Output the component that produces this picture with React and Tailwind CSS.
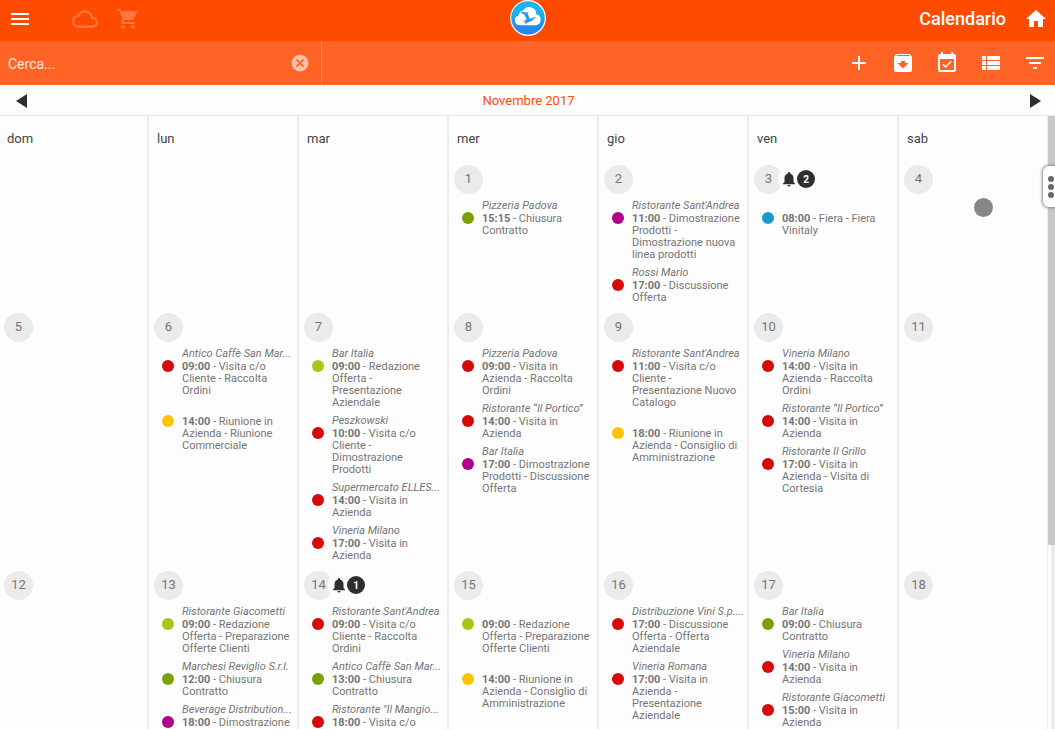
import {
  MdMenu,
  MdOutlineCloud,
  MdShoppingCart,
  MdHome,
  MdAdd,
  MdArchive,
  MdEventAvailable,
  MdViewList,
  MdFilterList,
  MdCancel,
  MdNotifications,
} from "react-icons/md";

const weekDays = ["dom", "lun", "mar", "mer", "gio", "ven", "sab"];

const colors = {
  red: "bg-[#d60808]",
  purple: "bg-[#b0008a]",
  green: "bg-[#7ba000]",
  lime: "bg-[#a4c814]",
  yellow: "bg-[#ffc400]",
  blue: "bg-[#1c98cc]",
};

const weeks = [
  [
    {},
    {},
    {},
    {
      day: 1,
      events: [["Pizzeria Padova", "15:15", "Chiusura Contratto", "green"]],
    },
    {
      day: 2,
      events: [
        ["Ristorante Sant'Andrea", "11:00", "Dimostrazione Prodotti - Dimostrazione nuova linea prodotti", "purple"],
        ["Rossi Mario", "17:00", "Discussione Offerta", "red"],
      ],
    },
    {
      day: 3,
      alerts: 2,
      events: [["", "08:00", "Fiera - Fiera Vinitaly", "blue"]],
    },
    { day: 4 },
  ],
  [
    { day: 5 },
    {
      day: 6,
      events: [
        ["Antico Caffè San Mar...", "09:00", "Visita c/o Cliente - Raccolta Ordini", "red"],
        ["", "14:00", "Riunione in Azienda - Riunione Commerciale", "yellow"],
      ],
    },
    {
      day: 7,
      events: [
        ["Bar Italia", "09:00", "Redazione Offerta - Presentazione Aziendale", "lime"],
        ["Peszkowski", "10:00", "Visita c/o Cliente - Dimostrazione Prodotti", "red"],
        ["Supermercato ELLES...", "14:00", "Visita in Azienda", "red"],
        ["Vineria Milano", "17:00", "Visita in Azienda", "red"],
      ],
    },
    {
      day: 8,
      events: [
        ["Pizzeria Padova", "09:00", "Visita in Azienda - Raccolta Ordini", "red"],
        ["Ristorante “Il Portico”", "14:00", "Visita in Azienda", "red"],
        ["Bar Italia", "17:00", "Dimostrazione Prodotti - Discussione Offerta", "purple"],
      ],
    },
    {
      day: 9,
      events: [
        ["Ristorante Sant'Andrea", "11:00", "Visita c/o Cliente - Presentazione Nuovo Catalogo", "red"],
        ["", "18:00", "Riunione in Azienda - Consiglio di Amministrazione", "yellow"],
      ],
    },
    {
      day: 10,
      events: [
        ["Vineria Milano", "14:00", "Visita in Azienda - Raccolta Ordini", "red"],
        ["Ristorante “Il Portico”", "14:00", "Visita in Azienda", "red"],
        ["Ristorante Il Grillo", "17:00", "Visita in Azienda - Visita di Cortesia", "red"],
      ],
    },
    { day: 11 },
  ],
  [
    { day: 12 },
    {
      day: 13,
      events: [
        ["Ristorante Giacometti", "09:00", "Redazione Offerta - Preparazione Offerte Clienti", "lime"],
        ["Marchesi Reviglio S.r.l.", "12:00", "Chiusura Contratto", "green"],
        ["Beverage Distribution...", "18:00", "Dimostrazione", "purple"],
      ],
    },
    {
      day: 14,
      alerts: 1,
      events: [
        ["Ristorante Sant'Andrea", "09:00", "Visita c/o Cliente - Raccolta Ordini", "red"],
        ["Antico Caffè San Mar...", "13:00", "Chiusura Contratto", "green"],
        ["Ristorante \"Il Mangio...", "18:00", "Visita c/o", "red"],
      ],
    },
    {
      day: 15,
      events: [
        ["", "09:00", "Redazione Offerta - Preparazione Offerte Clienti", "lime"],
        ["", "14:00", "Riunione in Azienda - Consiglio di Amministrazione", "yellow"],
      ],
    },
    {
      day: 16,
      events: [
        ["Distribuzione Vini S.p....", "17:00", "Discussione Offerta - Offerta Aziendale", "red"],
        ["Vineria Romana", "17:00", "Visita in Azienda - Presentazione Aziendale", "red"],
      ],
    },
    {
      day: 17,
      events: [
        ["Bar Italia", "09:00", "Chiusura Contratto", "green"],
        ["Vineria Milano", "14:00", "Visita in Azienda", "red"],
        ["Ristorante Giacometti", "15:00", "Visita in Azienda", "red"],
      ],
    },
    { day: 18 },
  ],
];

function Logo() {
  return (
    <svg viewBox="0 0 36 36" className="size-9" role="img" aria-label="Logo">
      <defs>
        <linearGradient id="sky" x1="0" y1="0" x2="0" y2="1">
          <stop offset="0.3" stopColor="#1cb4f0" />
          <stop offset="0.8" stopColor="#2888ec" />
        </linearGradient>
      </defs>
      <circle cx="18" cy="18" r="17.3" fill="url(#sky)" stroke="#fff" strokeWidth="1.2" />
      <path
        d="M9.500 25.200a5 5 0 0 1-.8-9.800 4.500 4.500 0 0 1 4.300-4.600 7 7 0 0 1 13.200 3.400 5.600 5.600 0 0 1-.2 11z"
        fill="#fff"
      />
      <path
        d="M10.600 12.400c1.600-.5 3-.5 4.300.1l3.600-.2-1 1.400c1 1.300 1.600 2.900 1.600 4.700 1.900.3 3.400-.1 4.700-1.100l2.600-.1-1.900 1c-1.500 2.300-3.400 3.400-5.600 3.800l-4.700 2.600 1.500-2.800-2.700-.3 3.600-2.300c-.4-1.500-1.100-2.600-2.200-3.400l.9-.5z"
        fill="#2896ee"
      />
    </svg>
  );
}

function Event({ event }) {
  const [name, time, text, color] = event;

  return (
    <li className="mb-[5px] pl-[33px]">
      <p className="h-[13px] truncate leading-[13px] italic">{name}</p>
      <div className="flex">
        <span className={`-ml-5 mr-2 size-3 shrink-0 rounded-full ${colors[color]}`} />
        <p className="flex-1 pt-px pr-[3px]">
          <b className="inline-block font-bold">{time}</b> - {text}
        </p>
      </div>
    </li>
  );
}

function Day({ cell }) {
  return (
    <td className="h-[38px] border-r-2 border-[#ebebeb] p-0 align-top">
      {cell.day && (
        <div className="flex h-[34px] items-start pl-[5px]">
          <span className="flex size-[29px] items-center justify-center rounded-full bg-[#ebebeb] pb-px text-[13px]">
            {cell.day}
          </span>
          {cell.alerts && (
            <span className="-ml-[5px] flex h-7 items-center rounded-l-full bg-[#fdfdfd] pl-0.5 text-[#2e2e2e]">
              <MdNotifications className="size-[18px]" />
              <span className="-ml-px flex size-[18px] items-center justify-center rounded-full bg-[#2e2e2e] text-[10px] font-bold text-white">
                {cell.alerts}
              </span>
            </span>
          )}
        </div>
      )}
      {cell.events && (
        <ul className="pb-1 text-[11px] leading-3">
          {cell.events.map((event, i) => (
            <Event key={i} event={event} />
          ))}
        </ul>
      )}
    </td>
  );
}

function App() {
  return (
    <div className="flex h-screen flex-col overflow-hidden bg-[#fdfdfd] font-['Roboto',sans-serif] text-[#757575]">
      {/* HEADER */}
      <header className="relative flex h-[41px] shrink-0 items-center justify-between bg-[#ff4b00] pr-[7px] pb-[3px] pl-2 text-white">
        <div className="flex items-center">
          <button type="button" aria-label="Menu">
            <MdMenu className="size-6" />
          </button>
          <MdOutlineCloud className="ml-10 size-[26px] text-[#ff7640]" />
          <MdShoppingCart className="ml-[18px] size-6 text-[#ff7640]" />
        </div>
        <div className="absolute left-1/2 top-0 -translate-x-1/2">
          <Logo />
        </div>
        <div className="flex items-center gap-[18px]">
          <h1 className="text-lg font-medium">Calendario</h1>
          <a href="#home" aria-label="Home">
            <MdHome className="size-6" />
          </a>
        </div>
      </header>

      {/* TOOLBAR */}
      <div className="flex h-11 shrink-0 items-stretch bg-[#ff6426] text-white">
        <div className="flex w-[322px] items-center border-r border-[#ff9166] pr-[11px] pl-2">
          <input
            type="text"
            placeholder="Cerca..."
            aria-label="Cerca"
            className="min-w-0 flex-1 pt-0.5 text-sm outline-none placeholder:text-white/85"
          />
          <button type="button" aria-label="Cancella" className="text-[#ffc1a8]">
            <MdCancel className="size-5" />
          </button>
        </div>
        <div className="flex flex-1 items-center justify-end gap-5 pr-2">
          <button type="button" aria-label="Aggiungi">
            <MdAdd className="size-6" />
          </button>
          <button type="button" aria-label="Archivia">
            <MdArchive className="size-6" />
          </button>
          <button type="button" aria-label="Attività">
            <MdEventAvailable className="size-6" />
          </button>
          <button type="button" aria-label="Elenco">
            <MdViewList className="size-6" />
          </button>
          <button type="button" aria-label="Filtra">
            <MdFilterList className="size-6" />
          </button>
        </div>
      </div>

      {/* MONTH */}
      <div className="flex h-[31px] shrink-0 items-center justify-between border-b border-[#e6e6e6] pt-px pr-[13px] pl-[15px] text-[#2e2e2e]">
        <button type="button" aria-label="Mese precedente">
          <svg viewBox="0 0 12 14" className="h-3.5 w-3">
            <path d="M12 0v14L1 7z" fill="currentColor" />
          </svg>
        </button>
        <h2 className="text-[13px] text-[#ff4b00]">Novembre 2017</h2>
        <button type="button" aria-label="Mese successivo">
          <svg viewBox="0 0 12 14" className="h-3.5 w-3">
            <path d="M0 0v14l11-7z" fill="currentColor" />
          </svg>
        </button>
      </div>

      {/* CALENDAR */}
      <main className="relative flex min-h-0 flex-1">
        <div className="-mx-px min-w-0 flex-1 overflow-hidden">
          <table className="w-full table-fixed border-separate border-spacing-0">
            <thead>
              <tr>
                {weekDays.map((name) => (
                  <th
                    key={name}
                    className="h-[49px] border-r-2 border-[#ebebeb] pb-1 pl-2 text-left text-[13px] font-normal text-[#444]"
                  >
                    {name}
                  </th>
                ))}
              </tr>
            </thead>
            <tbody>
              {weeks.map((week, i) => (
                <tr key={i}>
                  {week.map((cell, j) => (
                    <Day key={j} cell={cell} />
                  ))}
                </tr>
              ))}
            </tbody>
          </table>
        </div>

        {/* SCROLLBAR */}
        <div className="relative flex w-[7px] flex-col">
          <div className="h-[70%] bg-[#c8c8c8]" />
          <div className="flex-1 border-l-3 border-[#fdfdfd] bg-[#ebebeb]" />
        </div>

        {/* TOUCH POINTER */}
        <span className="absolute right-[62px] top-[82px] size-[19px] rounded-full bg-[#868686]" />

        {/* SIDE HANDLE */}
        <button
          type="button"
          aria-label="Apri pannello"
          className="absolute right-0 top-[50px] flex h-[41px] w-3 flex-col items-center justify-center gap-0.5 rounded-l-md bg-white pl-1 shadow-[0_0_3px_1px_#888]"
        >
          <span className="size-1.5 shrink-0 rounded-full bg-[#666]" />
          <span className="size-1.5 shrink-0 rounded-full bg-[#666]" />
          <span className="size-1.5 shrink-0 rounded-full bg-[#666]" />
        </button>
      </main>
    </div>
  );
}

export default App;
